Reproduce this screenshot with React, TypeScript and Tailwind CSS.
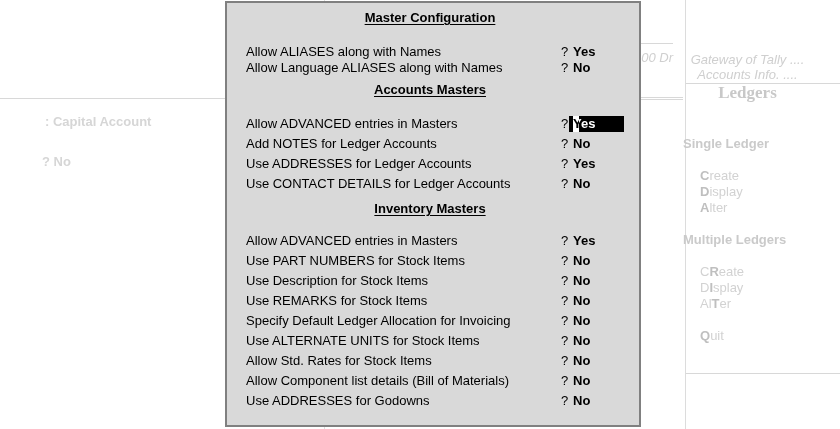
import React from 'react';

type Row = { label: string; value: string; active?: boolean };

const generalRows: Row[] = [
  { label: 'Allow ALIASES along with Names', value: 'Yes' },
  { label: 'Allow Language ALIASES along with Names', value: 'No' },
];

const accountRows: Row[] = [
  { label: 'Allow ADVANCED entries in Masters', value: 'Yes', active: true },
  { label: 'Add NOTES for Ledger Accounts', value: 'No' },
  { label: 'Use ADDRESSES for Ledger Accounts', value: 'Yes' },
  { label: 'Use CONTACT DETAILS for Ledger Accounts', value: 'No' },
];

const inventoryRows: Row[] = [
  { label: 'Allow ADVANCED entries in Masters', value: 'Yes' },
  { label: 'Use PART NUMBERS for Stock Items', value: 'No' },
  { label: 'Use Description for Stock Items', value: 'No' },
  { label: 'Use REMARKS for Stock Items', value: 'No' },
  { label: 'Specify Default Ledger Allocation for Invoicing', value: 'No' },
  { label: 'Use ALTERNATE UNITS for Stock Items', value: 'No' },
  { label: 'Allow Std. Rates for Stock Items', value: 'No' },
  { label: 'Allow Component list details (Bill of Materials)', value: 'No' },
  { label: 'Use ADDRESSES for Godowns', value: 'No' },
];

function OptionRow({ row, tall }: { row: Row; tall?: boolean }) {
  return (
    <div className={`flex items-center pl-[19px] ${tall ? 'h-[20px]' : 'h-[16px]'}`}>
      <span className="w-[315px] whitespace-nowrap">{row.label}</span>
      <span className="w-[8px]">?</span>
      {row.active ? (
        <span className="relative flex h-[16px] w-[55px] items-center bg-black pl-[4px] font-bold text-white">
          Yes
          {/* edit cursor */}
          <span className="absolute left-[4px] top-0 h-[16px] w-[6px] bg-white mix-blend-difference" />
        </span>
      ) : (
        <span className="w-[55px] pl-[4px] font-bold">{row.value}</span>
      )}
    </div>
  );
}

function Heading({ children }: { children: React.ReactNode }) {
  return (
    <div className="h-[20px] pr-[6px] text-center leading-[20px] font-bold">
      <span className="underline underline-offset-2">{children}</span>
    </div>
  );
}

function MenuItem({ pre, key1, post }: { pre?: string; key1: string; post: string }) {
  return (
    <div className="pl-[14px] leading-[16px] text-[#d2d2d2]">
      {pre}
      <span className="font-bold text-[#bfbfbf]">{key1}</span>
      {post}
    </div>
  );
}

export default function App() {
  return (
    <div
      className="relative h-[429px] w-[840px] overflow-hidden bg-white text-[13px] text-black"
      style={{ fontFamily: '"Liberation Sans", Arial, sans-serif' }}
    >
      {/* Background screen (faded) */}
      <div className="flex h-full">
        {/* Left column */}
        <div className="flex w-[325px] flex-col border-r border-[#e0e0e0]">
          <div className="h-[99px] border-b border-[#d8d8d8]" />
          <div className="mt-[15px] pl-[45px] leading-[16px] font-bold text-[#d6d6d6]">: Capital Account</div>
          <div className="mt-[24px] pl-[42px] leading-[16px] font-bold text-[#d6d6d6]">? No</div>
        </div>

        {/* Middle column */}
        <div className="flex w-[361px] flex-col border-r border-[#dcdcdc]">
          <div className="h-[43px] overflow-hidden">
            <div className="-mt-[11px] pr-[22px] text-right italic leading-[14px] text-[#cfcfcf]">0.00 Dr</div>
          </div>
          <div className="mr-[12px] w-[260px] self-end border-t border-[#d8d8d8]">
            <div className="mt-[7px] text-right italic leading-[14px] text-[#cfcfcf]">0.00 Dr</div>
          </div>
          <div className="mr-[2px] mt-[32px] h-[3px] border-y border-[#d8d8d8]" />
        </div>

        {/* Right column: menu */}
        <div className="flex flex-1 flex-col">
          <div className="flex h-[84px] flex-col justify-end border-b border-[#d8d8d8]">
            <div className="w-[123px] text-center italic leading-[15px] text-[#cfcfcf]">
              <div>Gateway of Tally ....</div>
              <div className="pb-[1px]">Accounts Info. ....</div>
            </div>
          </div>
          <div
            className="w-[123px] text-center text-[17px] font-bold leading-[18px] text-[#c8c8c8]"
            style={{ fontFamily: '"Liberation Serif", "Times New Roman", serif' }}
          >
            Ledgers
          </div>
          <div className="-ml-[3px] mt-[34px] leading-[16px] font-bold text-[#cacaca]">Single Ledger</div>
          <div className="mt-[16px]">
            <MenuItem key1="C" post="reate" />
            <MenuItem key1="D" post="isplay" />
            <MenuItem key1="A" post="lter" />
          </div>
          <div className="-ml-[3px] mt-[16px] leading-[16px] font-bold text-[#cacaca]">Multiple Ledgers</div>
          <div className="mt-[16px]">
            <MenuItem pre="C" key1="R" post="eate" />
            <MenuItem pre="D" key1="I" post="splay" />
            <MenuItem pre="Al" key1="T" post="er" />
          </div>
          <div className="mt-[16px]">
            <MenuItem key1="Q" post="uit" />
          </div>
          <div className="mt-[29px] border-t border-[#d8d8d8]" />
        </div>
      </div>

      {/* Master Configuration dialog */}
      <div className="absolute left-[225px] top-[1px] h-[426px] w-[416px] border-2 border-[#808080] bg-[#d9d9d9] pt-[5px]">
        <Heading>Master Configuration</Heading>
        <div className="mt-[16px]">
          {generalRows.map((r) => (
            <OptionRow key={r.label} row={r} />
          ))}
        </div>
        <div className="mt-[4px]">
          <Heading>Accounts Masters</Heading>
        </div>
        <div className="mt-[14px]">
          {accountRows.map((r) => (
            <OptionRow key={r.label} row={r} tall />
          ))}
        </div>
        <div className="mt-[5px]">
          <Heading>Inventory Masters</Heading>
        </div>
        <div className="mt-[12px]">
          {inventoryRows.map((r) => (
            <OptionRow key={r.label} row={r} tall />
          ))}
        </div>
      </div>
    </div>
  );
}
